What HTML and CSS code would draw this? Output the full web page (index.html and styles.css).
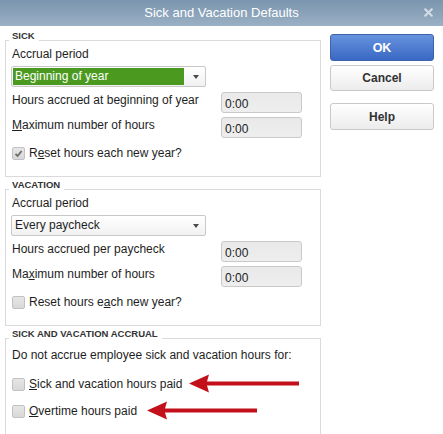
FILE: index.html
```html
<!DOCTYPE html>
<html>
<head>
<meta charset="utf-8">
<link rel="stylesheet" href="styles.css">
</head>
<body>
<div class="titlebar">
  <span class="title">Sick and Vacation Defaults</span>
  <svg class="close" width="9" height="9" viewBox="0 0 9 9"><path d="M1.2 1.2L7.8 7.8M7.8 1.2L1.2 7.8" stroke="#d6dee6" stroke-width="2" stroke-linecap="round"/></svg>
</div>
<div class="content">
  <div class="left">
    <div class="group sick">
      <div class="gtitle">SICK</div>
      <div class="plain">Accrual period</div>
      <div class="select">
        <div class="value selected">Beginning of year</div>
        <div class="arrow"><span class="tri"></span></div>
      </div>
      <div class="row"><span class="lbl">Hours accrued at beginning of year</span><span class="field">0:00</span></div>
      <div class="row row2"><span class="lbl"><u>M</u>aximum number of hours</span><span class="field">0:00</span></div>
      <div class="check">
        <span class="cb"><svg width="11" height="11" viewBox="0 0 11 11"><path d="M2.5 5.8L4.6 8L8.6 3" fill="none" stroke="#6a6a6a" stroke-width="1.8"/></svg></span>
        <span>R<u>e</u>set hours each new year?</span>
      </div>
    </div>
    <div class="group vacation">
      <div class="gtitle">VACATION</div>
      <div class="plain">Accrual period</div>
      <div class="select">
        <div class="value">Every paycheck</div>
        <div class="arrow"><span class="tri"></span></div>
      </div>
      <div class="row"><span class="lbl">Hours accrued per paycheck</span><span class="field">0:00</span></div>
      <div class="row row2"><span class="lbl">Ma<u>x</u>imum number of hours</span><span class="field">0:00</span></div>
      <div class="check">
        <span class="cb"></span>
        <span>Reset hours e<u>a</u>ch new year?</span>
      </div>
    </div>
    <div class="group accrual">
      <div class="gtitle">SICK AND VACATION ACCRUAL</div>
      <div class="plain intro">Do not accrue employee sick and vacation hours for:</div>
      <div class="check c1">
        <span class="cb"></span>
        <span><u>S</u>ick and vacation hours paid</span>
        <svg class="pointer p1" width="110" height="20" viewBox="0 0 110 20"><path d="M0 9.5L20 0.5L18 7.6L110 7.6L110 11.6L18 11.6L20 18.5Z" fill="#c3111b"/></svg>
      </div>
      <div class="check c2">
        <span class="cb"></span>
        <span><u>O</u>vertime hours paid</span>
        <svg class="pointer p2" width="110" height="20" viewBox="0 0 110 20"><path d="M0 9.5L20 0.5L18 7.6L110 7.6L110 11.6L18 11.6L20 18.5Z" fill="#c3111b"/></svg>
      </div>
    </div>
  </div>
  <div class="buttons">
    <div class="btn ok">OK</div>
    <div class="btn cancel">Cancel</div>
    <div class="btn help">Help</div>
  </div>
</div>
</body>
</html>
```
FILE: styles.css
```css
html, body {
  margin: 0;
  padding: 0;
  background: #ffffff;
}
body {
  font-family: "Liberation Sans", Arial, sans-serif;
  font-size: 12px;
  color: #1e1e1e;
  width: 443px;
  height: 434px;
  overflow: hidden;
}
.titlebar {
  height: 26px;
  background: linear-gradient(#7a95ae, #9ab0c4);
  display: flex;
  align-items: center;
  justify-content: center;
  position: relative;
}
.title {
  color: #ffffff;
  font-size: 13px;
  line-height: 26px;
}
.close {
  position: absolute;
  right: 10px;
  top: 8px;
}
.content {
  display: flex;
  align-items: flex-start;
  padding-left: 5px;
}
.left {
  width: 316px;
  padding-top: 14px;
}
.group {
  border: 1px solid #dadada;
  padding: 0 18px 15px 6px;
  margin-bottom: 12px;
}
.gtitle {
  width: fit-content;
  margin-top: -11px;
  margin-left: -3px;
  padding: 0 4px 0 3px;
  background: #ffffff;
  font-size: 9.5px;
  line-height: 11px;
  font-weight: bold;
  color: #333333;
}
.plain {
  margin-top: 5px;
  line-height: 16px;
}
.select {
  display: flex;
  box-sizing: border-box;
  width: 195px;
  height: 21px;
  margin-top: 4px;
  margin-left: -1px;
  border: 1px solid #c8c8c8;
  border-radius: 2px;
  background: linear-gradient(#ffffff, #f1f1f1);
}
.value {
  flex: 1;
  margin: 1px 0 1px 1px;
  padding-left: 2px;
  line-height: 17px;
}
.value.selected {
  background: #4b9a1f;
  color: #ffffff;
}
.arrow {
  width: 21px;
  display: flex;
  align-items: center;
  justify-content: center;
}
.tri {
  width: 0;
  height: 0;
  border-left: 3.5px solid transparent;
  border-right: 3.5px solid transparent;
  border-top: 4px solid #4a4a4a;
  margin-left: 2px;
}
.row {
  display: flex;
  justify-content: space-between;
  align-items: flex-start;
  margin-top: 5px;
}
.row2 {
  margin-top: 4px;
}
.lbl {
  line-height: 16px;
}
.field {
  box-sizing: border-box;
  width: 81px;
  height: 21px;
  border: 1px solid #c9c9c9;
  border-radius: 3px;
  background: linear-gradient(#e9e9e9, #eeeeee);
  padding: 3px 0 0 3px;
  line-height: 16px;
  color: #222222;
}
.check {
  display: flex;
  align-items: center;
  margin-top: 7px;
  line-height: 16px;
  white-space: nowrap;
}
.cb {
  box-sizing: border-box;
  width: 13px;
  height: 13px;
  margin-right: 4px;
  border: 1px solid #c2c2c2;
  border-radius: 2px;
  background: linear-gradient(#e6e6e6, #d8d8d8);
  display: flex;
  align-items: center;
  justify-content: center;
}
.intro {
  margin-top: 8px;
}
.accrual {
  padding-bottom: 14px;
}
.c1 {
  margin-top: 11px;
}
.c2 {
  margin-top: 7px;
}
.pointer {
  flex: none;
}
.p1 {
  margin-left: 7px;
}
.p2 {
  margin-left: 10px;
}
.buttons {
  margin-left: 9px;
  padding-top: 8px;
  width: 104px;
  display: flex;
  flex-direction: column;
}
.btn {
  box-sizing: border-box;
  height: 27px;
  border-radius: 3px;
  display: flex;
  align-items: center;
  justify-content: center;
  font-weight: bold;
  font-size: 12px;
  color: #333333;
  border: 1px solid #c9c9c9;
  background: linear-gradient(#ffffff, #ececec);
}
.ok {
  color: #ffffff;
  border-color: #3e63ab;
  background: linear-gradient(#6592de, #3b68c3);
  font-size: 12.5px;
}
.cancel {
  margin-top: 4px;
  height: 26px;
}
.help {
  margin-top: 12px;
}
```
